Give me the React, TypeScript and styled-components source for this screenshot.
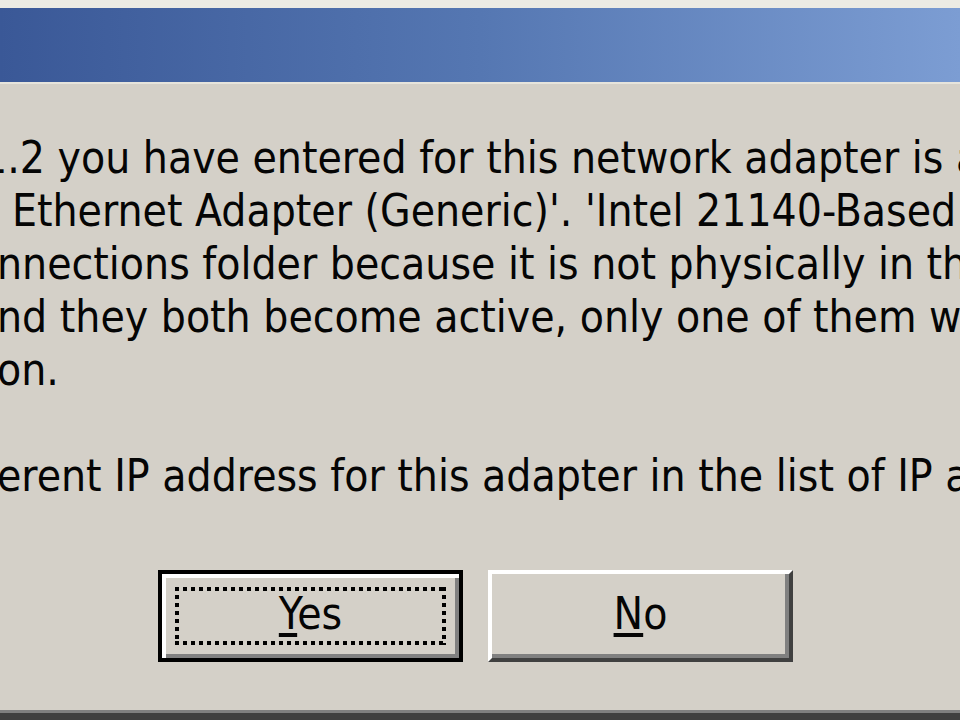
import React from 'react'
import styled, { createGlobalStyle } from 'styled-components'

const GlobalStyle = createGlobalStyle`
    html, body {
        margin: 0;
        padding: 0;
        background: #d4d0c8;
    }
`

const Window = styled.div`
    width: 960px;
    height: 720px;
    display: flex;
    flex-direction: column;
    overflow: hidden;
    background: #d4d0c8;
    font-family: "DejaVu Sans Condensed", "DejaVu Sans", sans-serif;
    font-size: 44px;
    color: #050505;
`

const TopEdge = styled.div`
    height: 8px;
    background: #ecebe4;
`

const TitleBar = styled.div`
    height: 74px;
    background: linear-gradient(to right, #3a5897 0%, #5577b2 50%, #7c9dd3 100%);
    border-bottom: 2px solid #e6e4dc;
`

const Body = styled.div`
    flex: 1;
    display: flex;
    flex-direction: column;
    padding-top: 47px;
    border-bottom: 3px solid #808080;
`

const Message = styled.div`
    line-height: 53px;
`

const Line = styled.div<{ $indent: number }>`
    white-space: nowrap;
    height: 53px;
    text-indent: ${p => p.$indent}px;
`

const ButtonRow = styled.div`
    display: flex;
    justify-content: center;
    gap: 25px;
    margin-top: 68px;
    padding-right: 9px;
`

const Button = styled.div<{ $default?: boolean }>`
    box-sizing: border-box;
    width: 305px;
    height: 92px;
    display: flex;
    align-items: center;
    justify-content: center;
    padding: 13px;
    ${p => p.$default
        ? `
        border: 4px solid #000;
        box-shadow: inset 4px 4px #ffffff, inset -4px -4px #808080;
        `
        : `
        border-top: 4px solid #ffffff;
        border-left: 4px solid #ffffff;
        border-bottom: 4px solid #404040;
        border-right: 4px solid #404040;
        box-shadow: inset -4px -4px #808080;
        `}
`

const dots = (dir: string) =>
    `repeating-linear-gradient(${dir}, #000 0 4px, transparent 4px 8px)`

const FocusRect = styled.div`
    flex: 1;
    align-self: stretch;
    display: flex;
    align-items: center;
    justify-content: center;
    background:
        ${dots('90deg')} top left / 100% 4px no-repeat,
        ${dots('90deg')} bottom left / 100% 4px no-repeat,
        ${dots('180deg')} top left / 4px 100% no-repeat,
        ${dots('180deg')} top right / 4px 100% no-repeat;
`

const Label = styled.span`
    line-height: 1;
    margin-top: -4px;
`

const Mnemonic = styled.span`
    text-decoration: underline;
    text-decoration-thickness: 4px;
    text-underline-offset: 4px;
`

const BottomEdge = styled.div`
    height: 7px;
    background: #404040;
`

const lines: { text: string; indent: number }[] = [
    { text: '1.2 you have entered for this network adapter is already', indent: -18 },
    { text: 'Ethernet Adapter (Generic)\'. \'Intel 21140-Based PCI Fast', indent: 12 },
    { text: 'nnections folder because it is not physically in the computer.', indent: -3 },
    { text: 'nd they both become active, only one of them will use', indent: -3 },
    { text: 'on.', indent: -3 },
    { text: '', indent: 0 },
    { text: 'erent IP address for this adapter in the list of IP addresses', indent: -3 },
]

const App: React.FC = () => {
    return (
        <Window>
            <GlobalStyle />
            <TopEdge />
            <TitleBar />
            <Body>
                <Message>
                    {lines.map((l, i) => (
                        <Line key={i} $indent={l.indent}>{l.text}</Line>
                    ))}
                </Message>
                <ButtonRow>
                    <Button $default>
                        <FocusRect>
                            <Label><Mnemonic>Y</Mnemonic>es</Label>
                        </FocusRect>
                    </Button>
                    <Button>
                        <Label><Mnemonic>N</Mnemonic>o</Label>
                    </Button>
                </ButtonRow>
            </Body>
            <BottomEdge />
        </Window>
    )
}

export default App
